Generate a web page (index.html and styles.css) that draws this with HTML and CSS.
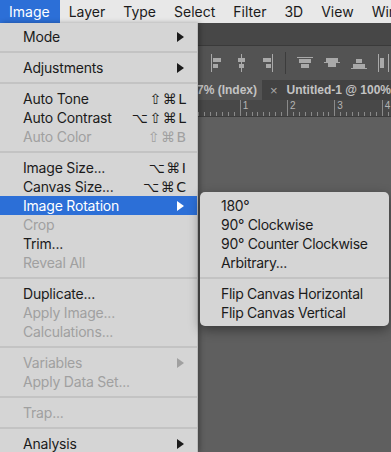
FILE: index.html
```html
<!DOCTYPE html>
<html lang="en">
<head>
    <meta charset="UTF-8">
    <meta name="viewport" content="width=device-width, initial-scale=1.0">
    <title>Image menu</title>
    <link rel="stylesheet" href="styles.css">
</head>
<body>

    <div class="menubar">
        <span class="menubar-item ativo">Image</span>
        <span class="menubar-item">Layer</span>
        <span class="menubar-item">Type</span>
        <span class="menubar-item">Select</span>
        <span class="menubar-item">Filter</span>
        <span class="menubar-item">3D</span>
        <span class="menubar-item">View</span>
        <span class="menubar-item">Window</span>
    </div>

    <div class="app">
        <div class="faixa-titulo"></div>

        <!-- barra de opções com os ícones de alinhamento -->
        <div class="barra-opcoes">
            <svg class="icone" width="14" height="18" viewBox="0 0 14 18">
                <rect x="1" y="0" width="1" height="18" fill="#a9a9a9"/>
                <rect x="3" y="4" width="8" height="4" fill="#a9a9a9"/>
                <rect x="3" y="10" width="5" height="4" fill="#a9a9a9"/>
            </svg>
            <svg class="icone" width="14" height="18" viewBox="0 0 14 18">
                <rect x="6" y="0" width="1" height="18" fill="#a9a9a9"/>
                <rect x="3" y="4" width="7" height="4" fill="#a9a9a9"/>
                <rect x="4" y="10" width="5" height="4" fill="#a9a9a9"/>
            </svg>
            <svg class="icone" width="14" height="18" viewBox="0 0 14 18">
                <rect x="12" y="0" width="1" height="18" fill="#a9a9a9"/>
                <rect x="3" y="4" width="8" height="4" fill="#a9a9a9"/>
                <rect x="6" y="10" width="5" height="4" fill="#a9a9a9"/>
            </svg>
            <span class="divisor"></span>
            <svg class="icone" width="16" height="18" viewBox="0 0 16 18">
                <rect x="0" y="3" width="16" height="1" fill="#a9a9a9"/>
                <rect x="2" y="5" width="12" height="4" fill="#a9a9a9"/>
                <rect x="4" y="10" width="8" height="4" fill="#a9a9a9"/>
            </svg>
            <svg class="icone" width="16" height="18" viewBox="0 0 16 18">
                <rect x="0" y="8" width="16" height="1" fill="#a9a9a9"/>
                <rect x="2" y="4" width="12" height="4" fill="#a9a9a9"/>
                <rect x="4" y="9" width="8" height="4" fill="#a9a9a9"/>
            </svg>
            <svg class="icone" width="16" height="18" viewBox="0 0 16 18">
                <rect x="0" y="14" width="16" height="1" fill="#a9a9a9"/>
                <rect x="5" y="5" width="6" height="4" fill="#a9a9a9"/>
                <rect x="2" y="10" width="12" height="4" fill="#a9a9a9"/>
            </svg>
            <svg class="icone" width="12" height="18" viewBox="0 0 12 18">
                <rect x="0" y="0" width="1" height="18" fill="#a9a9a9"/>
                <rect x="2" y="4" width="4" height="10" fill="#a9a9a9"/>
                <rect x="10" y="0" width="1" height="18" fill="#a9a9a9"/>
            </svg>
        </div>

        <div class="abas">
            <div class="aba aba-ativa">Untitled-1 @ 66.7% (Index)</div>
            <div class="aba">
                <span class="fechar">&times;</span>
                <span>Untitled-1 @ 100% (RGB/8)</span>
            </div>
        </div>

        <div class="regua">
            <span class="marca"></span>
            <span class="marca"></span>
            <span class="marca"></span>
            <span class="marca"></span>
            <span class="marca"></span>
            <span class="marca">1</span>
            <span class="marca">2</span>
            <span class="marca">3</span>
            <span class="marca">4</span>
        </div>

        <div class="area-trabalho"></div>
    </div>

    <!-- menu Image aberto -->
    <div class="menu">
        <div class="item"><span>Mode</span><svg class="seta" width="7" height="10" viewBox="0 0 7 10"><polygon points="0,0 7,5 0,10"/></svg></div>
        <div class="separador"></div>
        <div class="item"><span>Adjustments</span><svg class="seta" width="7" height="10" viewBox="0 0 7 10"><polygon points="0,0 7,5 0,10"/></svg></div>
        <div class="separador"></div>
        <div class="item"><span>Auto Tone</span><span class="atalho">⇧⌘L</span></div>
        <div class="item"><span>Auto Contrast</span><span class="atalho">⌥⇧⌘L</span></div>
        <div class="item desativado"><span>Auto Color</span><span class="atalho">⇧⌘B</span></div>
        <div class="separador"></div>
        <div class="item"><span>Image Size...</span><span class="atalho">⌥⌘I</span></div>
        <div class="item"><span>Canvas Size...</span><span class="atalho">⌥⌘C</span></div>
        <div class="item selecionado"><span>Image Rotation</span><svg class="seta" width="7" height="10" viewBox="0 0 7 10"><polygon points="0,0 7,5 0,10"/></svg></div>
        <div class="item desativado"><span>Crop</span></div>
        <div class="item"><span>Trim...</span></div>
        <div class="item desativado"><span>Reveal All</span></div>
        <div class="separador"></div>
        <div class="item"><span>Duplicate...</span></div>
        <div class="item desativado"><span>Apply Image...</span></div>
        <div class="item desativado"><span>Calculations...</span></div>
        <div class="separador"></div>
        <div class="item desativado"><span>Variables</span><svg class="seta" width="7" height="10" viewBox="0 0 7 10"><polygon points="0,0 7,5 0,10"/></svg></div>
        <div class="item desativado"><span>Apply Data Set...</span></div>
        <div class="separador"></div>
        <div class="item desativado"><span>Trap...</span></div>
        <div class="separador"></div>
        <div class="item"><span>Analysis</span><svg class="seta" width="7" height="10" viewBox="0 0 7 10"><polygon points="0,0 7,5 0,10"/></svg></div>
    </div>

    <!-- submenu Image Rotation -->
    <div class="submenu">
        <div class="item"><span>180°</span></div>
        <div class="item"><span>90° Clockwise</span></div>
        <div class="item"><span>90° Counter Clockwise</span></div>
        <div class="item"><span>Arbitrary...</span></div>
        <div class="separador"></div>
        <div class="item"><span>Flip Canvas Horizontal</span></div>
        <div class="item"><span>Flip Canvas Vertical</span></div>
    </div>

</body>
</html>
```

FILE: styles.css
```css
* {
    margin: 0;
    padding: 0;
    box-sizing: border-box;
}

body {
    width: 391px;
    height: 452px;
    overflow: hidden;
    position: relative;
    background-color: #5f5f5f;
    font-family: "Inter", "DejaVu Sans", sans-serif;
    font-size: 14px;
    color: #1b1b1b;
}

/* Barra de menus do sistema */
.menubar {
    height: 23px;
    display: flex;
    align-items: stretch;
    background-color: #e8e8e8;
    white-space: nowrap;
    overflow: hidden;
}

.menubar-item {
    display: flex;
    align-items: center;
    padding: 0 9px;
}

.menubar-item.ativo {
    background-color: #2c6fd7;
    color: white;
    padding-right: 10px;
}

/* Janela do aplicativo por baixo do menu */
.faixa-titulo {
    height: 23px;
    background-color: #474747;
    border-bottom: 1px solid #3a3a3a;
}

.barra-opcoes {
    height: 34px;
    background-color: #535353;
    display: flex;
    align-items: center;
    gap: 11px;
    padding-left: 210px;
    white-space: nowrap;
    overflow: hidden;
}

.divisor {
    width: 1px;
    height: 22px;
    flex-shrink: 0;
    background-color: #3c3c3c;
}

.icone {
    flex-shrink: 0;
}

.abas {
    height: 20px;
    display: flex;
    background-color: #424242;
    font-family: "Liberation Sans", sans-serif;
    font-weight: bold;
    font-size: 12px;
    color: #c3c3c3;
    white-space: nowrap;
    overflow: hidden;
}

.aba {
    display: flex;
    align-items: center;
    gap: 9px;
    padding: 0 8px;
}

.aba-ativa {
    width: 262px;
    flex-shrink: 0;
    justify-content: flex-end;
    padding-right: 5px;
    background-color: #535353;
}

.fechar {
    font-weight: normal;
    font-size: 13px;
    color: #a8a8a8;
}

.regua {
    height: 17px;
    display: flex;
    padding-left: 3px;
    background-color: #484848;
    background-image:
        repeating-linear-gradient(to right, #8a8a8a 0 1px, transparent 1px 5.917px);
    background-size: 100% 4px;
    background-position: 3px bottom;
    background-repeat: repeat-x;
    border-bottom: 1px solid #3d3d3d;
    font-family: "Liberation Sans", sans-serif;
    font-size: 10px;
    color: #b4b4b4;
    overflow: hidden;
}

.marca {
    width: 47.33px;
    flex-shrink: 0;
    border-left: 1px solid #8a8a8a;
    padding-left: 2px;
    line-height: 12px;
}

.area-trabalho {
    height: 335px;
    background-color: #5f5f5f;
}

/* Menu suspenso */
.menu, .submenu {
    position: absolute;
    background-color: #d5d5d5;
    padding: 4px 0;
    white-space: nowrap;
    letter-spacing: -0.2px;
}

.menu {
    top: 23px;
    left: 0;
    width: 198px;
    height: 429px;
    overflow: hidden;
    border-right: 1px solid #bcbcbc;
    box-shadow: 2px 0 5px rgba(0, 0, 0, 0.3);
}

.submenu {
    top: 192px;
    left: 200px;
    width: 189px;
    border-radius: 5px;
    box-shadow: 0 4px 12px rgba(0, 0, 0, 0.4);
    letter-spacing: -0.3px;
}

.item {
    height: 19px;
    display: flex;
    align-items: center;
    justify-content: space-between;
    padding: 0 11px 0 23px;
}

.submenu .item {
    padding-left: 21px;
}

.atalho {
    font-family: "DejaVu Sans", sans-serif;
    font-size: 14px;
    letter-spacing: 1.5px;
    margin-right: -1.5px;
}

.seta {
    fill: #1b1b1b;
    margin-right: 2px;
}

.desativado {
    color: #a0a0a0;
}

.desativado .seta {
    fill: #a0a0a0;
}

.selecionado {
    background-color: #2c6fd7;
    color: white;
}

.selecionado .seta {
    fill: white;
}

.separador {
    height: 12px;
    display: flex;
    align-items: center;
}

.separador::before {
    content: "";
    flex: 1;
    height: 2px;
    background-color: #c3c3c3;
}
```
